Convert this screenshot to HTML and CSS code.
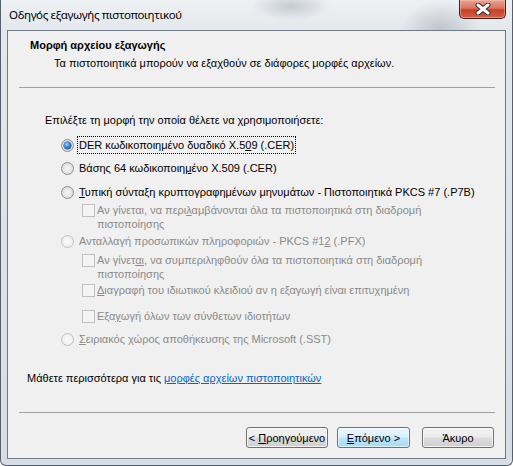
FILE: index.html
```html
<!DOCTYPE html>
<html lang="el">
<head>
    <meta charset="UTF-8">
    <meta name="viewport" content="width=device-width, initial-scale=1.0">
    <title>Οδηγός εξαγωγής πιστοποιητικού</title>
    <link rel="stylesheet" href="styles.css">
</head>
<body>
<div class="window">
    <div class="titlebar">
        <span class="title">Οδηγός εξαγωγής πιστοποιητικού</span>
        <button class="close-button" title="Κλείσιμο">
            <svg width="16" height="12" viewBox="0 0 16 12">
                <path d="M3 2 L13 10 M13 2 L3 10" stroke="#3b2a2a" stroke-width="5" stroke-linecap="round"/>
                <path d="M3 2 L13 10 M13 2 L3 10" stroke="#ffffff" stroke-width="3" stroke-linecap="round"/>
            </svg>
        </button>
    </div>

    <div class="client">
        <div class="header">
            <div class="header-title">Μορφή αρχείου εξαγωγής</div>
            <div class="header-sub">Τα πιστοποιητικά μπορούν να εξαχθούν σε διάφορες μορφές αρχείων.</div>
        </div>
        <div class="rule"></div>

        <div class="content">
            <div class="prompt">Επιλέξτε τη μορφή την οποία θέλετε να χρησιμοποιήσετε:</div>

            <div class="option radio-option gap-11">
                <span class="radio checked"></span>
                <span class="label focused">DER κωδικοποιημένο δυαδικό X.5<u>0</u>9 (.CER)</span>
            </div>
            <div class="option radio-option gap-9">
                <span class="radio"></span>
                <span class="label">Βάσης 64 κωδικοποιη<u>μ</u>ένο X.509 (.CER)</span>
            </div>
            <div class="option radio-option gap-10">
                <span class="radio"></span>
                <span class="label"><u>Τ</u>υπική σύνταξη κρυπτογραφημένων μηνυμάτων - Πιστοποιητικά PKCS #7 (.P7B)</span>
            </div>
            <div class="option check-option disabled gap-4">
                <span class="checkbox"></span>
                <span class="label">Αν γίνεται, να περι<u>λ</u>αμβάνονται όλα τα πιστοποιητικά στη διαδρομή<br>πιστοποίησης</span>
            </div>
            <div class="option radio-option disabled gap-3">
                <span class="radio"></span>
                <span class="label">Ανταλλαγή προσωπικών πληροφοριών - PKCS #1<u>2</u> (.PFX)</span>
            </div>
            <div class="option check-option disabled gap-5">
                <span class="checkbox"></span>
                <span class="label">Αν γίνετ<u>αι</u>, να συμπεριληφθούν όλα τα πιστοποιητικά στη διαδρομή<br>πιστοποίησης</span>
            </div>
            <div class="option check-option disabled gap-2">
                <span class="checkbox"></span>
                <span class="label"><u>Δ</u>ιαγραφή του ιδιωτικού κλειδιού αν η εξαγωγή είναι επιτυχημένη</span>
            </div>
            <div class="option check-option disabled gap-12">
                <span class="checkbox"></span>
                <span class="label">Εξα<u>γ</u>ωγή όλων των σύνθετων ιδιοτήτων</span>
            </div>
            <div class="option radio-option disabled gap-9">
                <span class="radio"></span>
                <span class="label"><u>Σ</u>ειριακός χώρος αποθήκευσης της Microsoft (.SST)</span>
            </div>

            <div class="more">Μάθετε περισσότερα για τις <a href="#">μορφές αρχείων πιστοποιητικών</a></div>
        </div>

        <div class="footer">
            <div class="rule"></div>
            <div class="buttons">
                <button class="btn btn-back">&lt; <u>Π</u>ροηγούμενο</button>
                <button class="btn btn-next default"><u>Ε</u>πόμενο &gt;</button>
                <button class="btn btn-cancel">Άκυρο</button>
            </div>
        </div>
    </div>
</div>
</body>
</html>
```

FILE: styles.css
```css
html, body {
    margin: 0;
    padding: 0;
    background: #ffffff;
}

.window {
    box-sizing: border-box;
    width: 513px;
    height: 466px;
    border: 1px solid #55606c;
    border-top: none;
    border-radius: 0 0 6px 6px;
    background:
        radial-gradient(ellipse 40px 14px at 290px 6px, rgba(150, 158, 166, 0.45), transparent),
        radial-gradient(ellipse 40px 30px at 440px 30px, rgba(120, 128, 138, 0.35), transparent),
        linear-gradient(to bottom, #eef1f4 0px, #e3e8ec 30px, #d6dde4 100%);
    display: flex;
    flex-direction: column;
    font-family: "Liberation Sans", Arial, sans-serif;
    font-size: 11px;
    color: #000000;
}

.titlebar {
    height: 30px;
    display: flex;
    align-items: flex-start;
}

.title {
    font-family: "Noto Sans", "Open Sans", sans-serif;
    font-size: 11.5px;
    letter-spacing: -0.35px;
    line-height: 16px;
    margin: 7px 0 0 8px;
    color: #000000;
}

.close-button {
    margin-left: auto;
    margin-right: 6px;
    width: 47px;
    height: 19px;
    padding: 0;
    border: 1px solid #4a1f17;
    border-top: none;
    border-radius: 0 0 5px 5px;
    background: linear-gradient(to bottom, #e9a392 0%, #db7560 45%, #c8402a 55%, #d65f47 100%);
    box-shadow: inset 0 0 0 1px rgba(255, 200, 190, 0.45);
    display: flex;
    align-items: center;
    justify-content: center;
}

.client {
    box-sizing: border-box;
    height: 429px;
    margin: 0 6px;
    border: 1px solid #6f7a86;
    background: #f0f0f0;
    display: flex;
    flex-direction: column;
}

.header {
    height: 56px;
    box-sizing: border-box;
    padding-top: 8px;
}

.header-title {
    font-weight: bold;
    line-height: 13px;
    padding-left: 22px;
}

.header-sub {
    line-height: 13px;
    margin-top: 5px;
    padding-left: 46px;
}

.rule {
    height: 0;
    border-top: 1px solid #a0a0a0;
    margin: 0 10px 0 11px;
}

.content {
    flex: 1;
    padding-top: 25px;
}

.prompt {
    line-height: 14px;
    padding-left: 37px;
}

.option {
    display: flex;
    align-items: flex-start;
    line-height: 14px;
}

.radio-option {
    padding-left: 53px;
}

.check-option {
    padding-left: 74px;
}

.gap-2 { margin-top: 2px; }
.gap-3 { margin-top: 3px; }
.gap-4 { margin-top: 4px; }
.gap-5 { margin-top: 5px; }
.gap-9 { margin-top: 9px; }
.gap-10 { margin-top: 10px; }
.gap-11 { margin-top: 11px; }
.gap-12 { margin-top: 12px; }

.radio {
    box-sizing: border-box;
    flex: none;
    width: 13px;
    height: 13px;
    margin-top: 1px;
    margin-right: 5px;
    border-radius: 50%;
    border: 1px solid #8e8f8f;
    background: radial-gradient(circle at 50% 50%, #f6f6f6 0%, #e6e6e6 50%, #cfcfcf 100%);
    position: relative;
}

.radio.checked::after {
    content: "";
    position: absolute;
    left: 2px;
    top: 2px;
    width: 7px;
    height: 7px;
    border-radius: 50%;
    background: radial-gradient(circle at 40% 35%, #a8dcff 0%, #3f93e0 35%, #104f9c 80%);
    box-shadow: 0 0 0 0.5px #1c4a80;
}

.checkbox {
    box-sizing: border-box;
    flex: none;
    width: 13px;
    height: 13px;
    margin-top: 1px;
    margin-right: 2px;
    border: 1px solid #8e8f8f;
    background: linear-gradient(135deg, #dcdcdc 0%, #f4f4f4 100%);
    box-shadow: inset 0 0 0 1px #f4f4f4;
}

.label u {
    text-decoration: underline;
    text-underline-offset: 1px;
}

.label.focused {
    outline: 1px dotted #000000;
    outline-offset: 1px;
}

.disabled .label {
    color: #8a8a8a;
}

.disabled .radio {
    border-color: #c0c0c0;
    background: radial-gradient(circle at 50% 50%, #fafafa 0%, #f0f0f0 60%, #e4e4e4 100%);
}

.disabled .checkbox {
    border-color: #c0c0c0;
    background: #f4f4f4;
    box-shadow: none;
}

.more {
    margin-top: 25px;
    padding-left: 19px;
    line-height: 14px;
}

.more a {
    color: #0066cc;
    text-decoration: underline;
}

.footer {
    flex: none;
}

.buttons {
    display: flex;
    justify-content: flex-end;
    padding: 14px 11px 10px 0;
}

.btn {
    box-sizing: border-box;
    height: 21px;
    padding: 0;
    font-family: "Liberation Sans", Arial, sans-serif;
    font-size: 11px;
    color: #000000;
    border: 1px solid #707070;
    border-radius: 3px;
    background: linear-gradient(to bottom, #f2f2f2 0%, #ebebeb 49%, #dddddd 51%, #cfcfcf 100%);
    box-shadow: inset 0 0 0 1px rgba(255, 255, 255, 0.7);
}

.btn.default {
    border-color: #3c7fb1;
    background: linear-gradient(to bottom, #eaf6fd 0%, #d9f0fc 49%, #bee6fd 51%, #a7d9f5 100%);
    box-shadow: inset 0 0 0 1px rgba(255, 255, 255, 0.6);
}

.btn-back {
    width: 82px;
}

.btn-next {
    width: 73px;
    margin-left: 9px;
}

.btn-cancel {
    width: 72px;
    margin-left: 12px;
}
```
